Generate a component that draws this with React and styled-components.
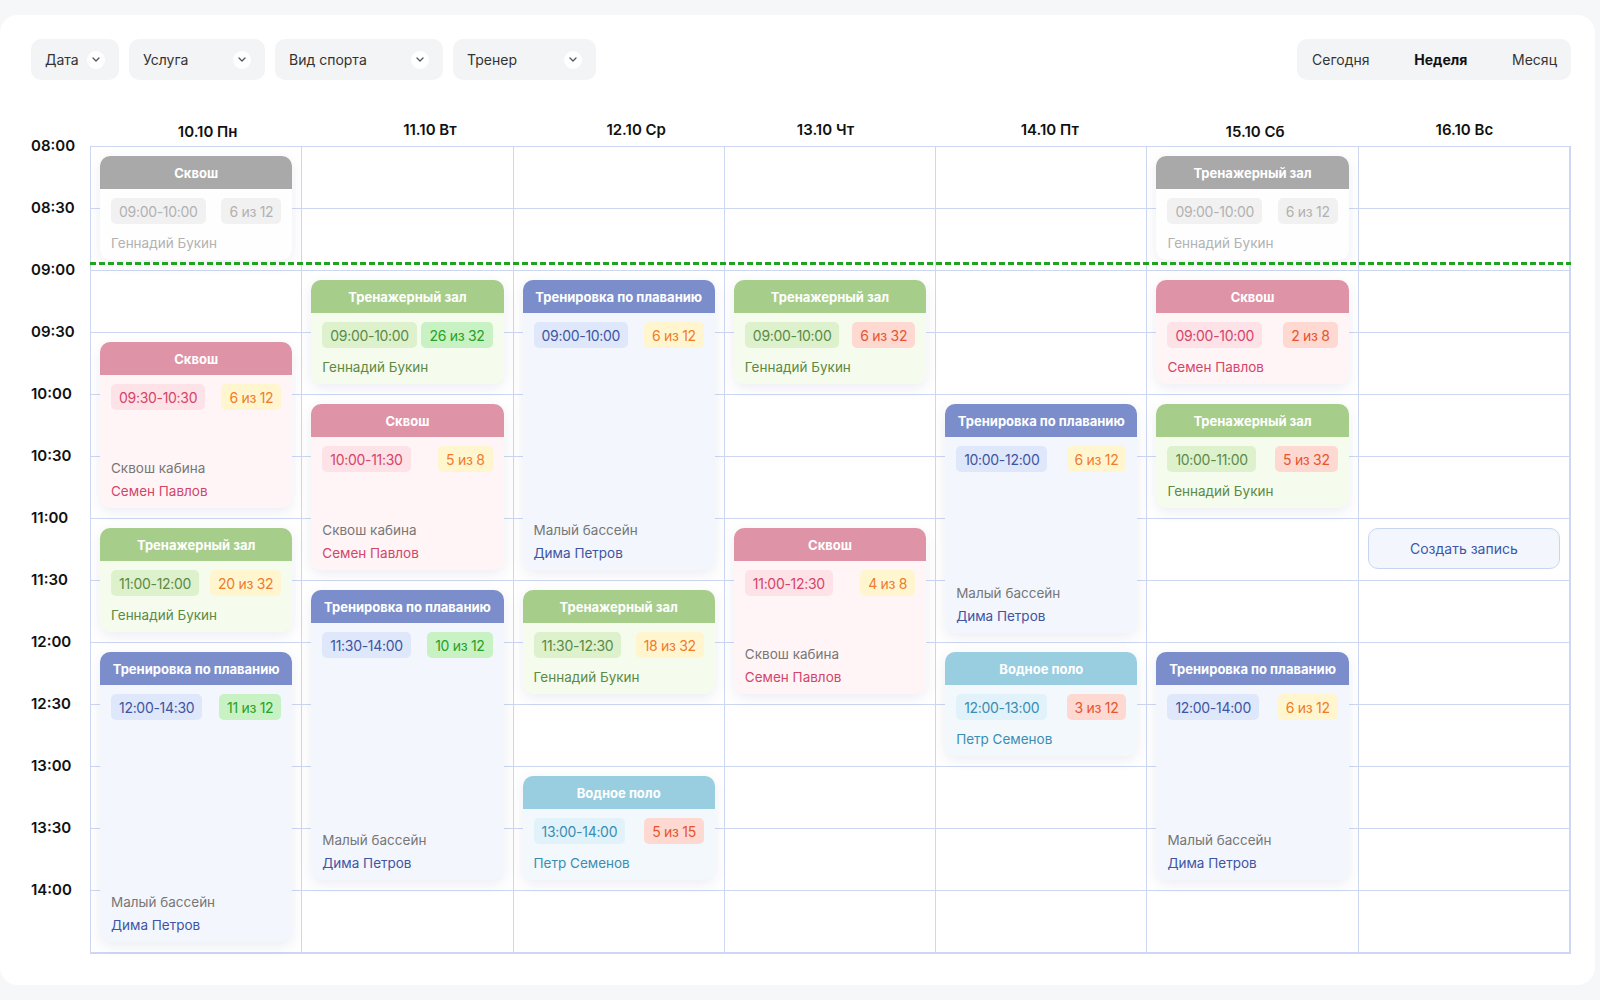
import React from 'react';
import styled, { createGlobalStyle } from 'styled-components';

const ROW = 62;
const SLOTS = 13;

const GlobalStyle = createGlobalStyle`
  * { box-sizing: border-box; }
  body {
    margin: 0;
    background: #f6f7f9;
    font-family: Inter, "Noto Sans", "Liberation Sans", sans-serif;
    color: #222;
  }
`;

// colour sets for every kind of training
const themes = {
  grey: { head: '#a9a9a9', body: '#fefefe', chip: '#f1f1f1', text: '#b2b2b2' },
  pink: { head: '#de93a6', body: '#fff5f6', chip: '#fde2e7', text: '#d4456a' },
  green: { head: '#a7cd8b', body: '#f5fcee', chip: '#ddf1cd', text: '#5c8a45' },
  blue: { head: '#7b8ecb', body: '#f3f6fd', chip: '#dfe7fa', text: '#3e55a3' },
  water: { head: '#99cde0', body: '#f3f8fc', chip: '#e2f2fa', text: '#3a8db3' },
};

const counts = {
  yellow: { bg: '#fff6cf', fg: '#ef7b2d' },
  green: { bg: '#c8f1c4', fg: '#27a127' },
  red: { bg: '#fdd9d1', fg: '#e5552f' },
  grey: { bg: '#f1f1f1', fg: '#b2b2b2' },
};

const Page = styled.div`
  padding: 15px 5px 15px 0;
`;

const Panel = styled.div`
  background: #fff;
  border-radius: 18px;
  padding: 24px 24px 31px 31px;
`;

const Toolbar = styled.div`
  display: flex;
  justify-content: space-between;
  align-items: center;
  height: 41px;
`;

const Filters = styled.div`
  display: flex;
  gap: 10px;
`;

const Filter = styled.button`
  display: flex;
  align-items: center;
  justify-content: space-between;
  width: ${p => p.$w}px;
  height: 41px;
  padding: 0 14px;
  border: none;
  border-radius: 10px;
  background: #f3f4f6;
  font: 400 14px Inter, "Noto Sans", sans-serif;
  color: #333;
`;

const Chevron = styled.span`
  display: flex;
  align-items: center;
  justify-content: center;
  width: 18px;
  height: 18px;
  border-radius: 50%;
  background: #fff;
`;

const Segment = styled.div`
  display: flex;
  align-items: center;
  justify-content: space-between;
  width: 274px;
  height: 41px;
  padding: 0 14px 0 15px;
  border-radius: 10px;
  background: #f3f4f6;
`;

const SegItem = styled.span`
  font-size: 14px;
  font-weight: ${p => (p.$active ? 700 : 400)};
  color: ${p => (p.$active ? '#111' : '#333')};
`;

const DayHeads = styled.div`
  display: grid;
  grid-template-columns: repeat(7, 1fr);
  height: 34px;
  margin: 32px 0 0 60px;
  padding-right: 1px;
`;

const DayHead = styled.div`
  display: flex;
  align-items: center;
  justify-content: center;
  font-size: 15px;
  font-weight: 600;
  color: #111;

  span {
    transform: translate(${p => p.$dx || 0}px, ${p => p.$dy || 0}px);
  }
`;

const Body = styled.div`
  display: flex;
`;

const TimeCol = styled.div`
  width: 59px;
  flex: none;
`;

const TimeCell = styled.div`
  height: ${ROW}px;
  font-size: 15px;
  font-weight: 600;
  line-height: 18px;
  color: #111;

  span {
    display: block;
    transform: translateY(-50%);
  }
`;

const Days = styled.div`
  position: relative;
  flex: 1;
  display: grid;
  grid-template-columns: repeat(7, 1fr);
  border: 1px solid #cdd7f2;
`;

const DayCol = styled.div`
  position: relative;
  border-right: 1px solid #cdd7f2;

  &:last-child {
    border-right: none;
  }
`;

const Slot = styled.div`
  height: ${ROW}px;
  border-bottom: 1px solid #cdd7f2;

  &:last-child {
    height: ${ROW - 1}px;
    border-bottom: none;
  }
`;

const NowLine = styled.div`
  position: absolute;
  left: -1px;
  right: -1px;
  top: 115px;
  height: 3px;
  background: repeating-linear-gradient(90deg, #20a420 0 6px, transparent 6px 9px);
  z-index: 3;
`;

const Card = styled.div`
  position: absolute;
  left: 9px;
  right: 9px;
  display: flex;
  flex-direction: column;
  border-radius: 10px;
  overflow: hidden;
  background: ${p => themes[p.$theme].body};
  box-shadow: 0 4px 14px rgba(40, 60, 120, 0.09);
  z-index: 2;
`;

const CardHead = styled.div`
  height: 33px;
  flex: none;
  display: flex;
  align-items: center;
  justify-content: center;
  background: ${p => themes[p.$theme].head};
  color: #fff;
  font-size: 13px;
  font-weight: 700;
  white-space: nowrap;
`;

const CardBody = styled.div`
  flex: 1;
  display: flex;
  flex-direction: column;
  justify-content: space-between;
  gap: 10px;
  padding: 9px 11px 8px;
`;

const Chips = styled.div`
  display: flex;
  justify-content: space-between;
`;

const Chip = styled.span`
  flex: none;
  height: 26px;
  padding: 0 8px;
  display: flex;
  align-items: center;
  border-radius: 5px;
  font-size: 14px;
  letter-spacing: -0.3px;
  white-space: nowrap;
  background: ${p => p.$bg};
  color: ${p => p.$fg};
`;

const Footer = styled.div`
  display: flex;
  flex-direction: column;
  gap: 5px;
  font-size: 13.5px;
  line-height: 18px;
`;

const Place = styled.span`
  color: #777;
`;

const Coach = styled.span`
  color: ${p => themes[p.$theme].text};
`;

const CreateButton = styled.button`
  position: absolute;
  left: 9px;
  right: 9px;
  height: 41px;
  border: 1px solid #c8d5f1;
  border-radius: 10px;
  background: #f3f6fd;
  font: 400 14px Inter, "Noto Sans", sans-serif;
  color: #3c58a8;
`;

const filters = [
  { label: 'Дата', w: 88 },
  { label: 'Услуга', w: 136 },
  { label: 'Вид спорта', w: 168 },
  { label: 'Тренер', w: 143 },
];

const times = ['08:00', '08:30', '09:00', '09:30', '10:00', '10:30', '11:00', '11:30', '12:00', '12:30', '13:00', '13:30', '14:00'];

const gym = (slot, time, count, tone, theme = 'green') => ({
  slot, h: 104, theme, title: 'Тренажерный зал', time, count, tone, coach: 'Геннадий Букин',
});
const squash = (slot, time, count, tone, h = 166) => ({
  slot, h, theme: 'pink', title: 'Сквош', time, count, tone,
  place: h > 104 ? 'Сквош кабина' : null, coach: 'Семен Павлов',
});
const swim = (slot, h, time, count, tone) => ({
  slot, h, theme: 'blue', title: 'Тренировка по плаванию', time, count, tone,
  place: 'Малый бассейн', coach: 'Дима Петров',
});
const polo = (slot, time, count) => ({
  slot, h: 104, theme: 'water', title: 'Водное поло', time, count, tone: 'red', coach: 'Петр Семенов',
});

const days = [
  {
    label: '10.10 Пн', dx: 11, dy: 2,
    events: [
      { ...squash(0, '09:00-10:00', '6 из 12', 'grey', 104), theme: 'grey', coach: 'Геннадий Букин' },
      squash(3, '09:30-10:30', '6 из 12', 'yellow'),
      gym(6, '11:00-12:00', '20 из 32', 'yellow'),
      swim(8, 290, '12:00-14:30', '11 из 12', 'green'),
    ],
  },
  {
    label: '11.10 Вт', dx: 22,
    events: [
      gym(2, '09:00-10:00', '26 из 32', 'green'),
      squash(4, '10:00-11:30', '5 из 8', 'yellow'),
      swim(7, 290, '11:30-14:00', '10 из 12', 'green'),
    ],
  },
  {
    label: '12.10 Ср', dx: 17,
    events: [
      swim(2, 290, '09:00-10:00', '6 из 12', 'yellow'),
      gym(7, '11:30-12:30', '18 из 32', 'yellow'),
      polo(10, '13:00-14:00', '5 из 15'),
    ],
  },
  {
    label: '13.10 Чт', dx: -5,
    events: [
      gym(2, '09:00-10:00', '6 из 32', 'red'),
      squash(6, '11:00-12:30', '4 из 8', 'yellow'),
    ],
  },
  {
    label: '14.10 Пт', dx: 8,
    events: [
      swim(4, 229, '10:00-12:00', '6 из 12', 'yellow'),
      polo(8, '12:00-13:00', '3 из 12'),
    ],
  },
  {
    label: '15.10 Сб', dx: 2, dy: 2,
    events: [
      gym(0, '09:00-10:00', '6 из 12', 'grey', 'grey'),
      squash(2, '09:00-10:00', '2 из 8', 'red', 104),
      gym(4, '10:00-11:00', '5 из 32', 'red'),
      swim(8, 228, '12:00-14:00', '6 из 12', 'yellow'),
    ],
  },
  { label: '16.10 Вс', events: [], create: 6 },
];

const ChevronDown = () => (
  <Chevron>
    <svg width="8" height="5" viewBox="0 0 8 5" fill="none">
      <path d="M1 1l3 3 3-3" stroke="#555" strokeWidth="1.3" strokeLinecap="round" strokeLinejoin="round" />
    </svg>
  </Chevron>
);

const EventCard = ({ ev }) => {
  const t = themes[ev.theme];
  const c = counts[ev.tone];
  return (
    <Card $theme={ev.theme} style={{ top: ev.slot * ROW + 9, height: ev.h }}>
      <CardHead $theme={ev.theme}>{ev.title}</CardHead>
      <CardBody>
        <Chips>
          <Chip $bg={t.chip} $fg={t.text}>{ev.time}</Chip>
          <Chip $bg={c.bg} $fg={c.fg}>{ev.count}</Chip>
        </Chips>
        <Footer>
          {ev.place && <Place>{ev.place}</Place>}
          <Coach $theme={ev.theme}>{ev.coach}</Coach>
        </Footer>
      </CardBody>
    </Card>
  );
};

const App = () => (
  <Page>
    <GlobalStyle />
    <Panel>
      <Toolbar>
        <Filters>
          {filters.map(f => (
            <Filter key={f.label} $w={f.w}>
              {f.label}
              <ChevronDown />
            </Filter>
          ))}
        </Filters>
        <Segment>
          <SegItem>Сегодня</SegItem>
          <SegItem $active>Неделя</SegItem>
          <SegItem>Месяц</SegItem>
        </Segment>
      </Toolbar>

      <DayHeads>
        {days.map(d => (
          <DayHead key={d.label} $dx={d.dx} $dy={d.dy}><span>{d.label}</span></DayHead>
        ))}
      </DayHeads>

      <Body>
        <TimeCol>
          {times.map(t => (
            <TimeCell key={t}><span>{t}</span></TimeCell>
          ))}
        </TimeCol>
        <Days>
          {days.map(d => (
            <DayCol key={d.label}>
              {Array.from({ length: SLOTS }, (_, i) => <Slot key={i} />)}
              {d.events.map((ev, i) => <EventCard key={i} ev={ev} />)}
              {d.create != null && (
                <CreateButton style={{ top: d.create * ROW + 9 }}>Создать запись</CreateButton>
              )}
            </DayCol>
          ))}
          <NowLine />
        </Days>
      </Body>
    </Panel>
  </Page>
);

export default App;
